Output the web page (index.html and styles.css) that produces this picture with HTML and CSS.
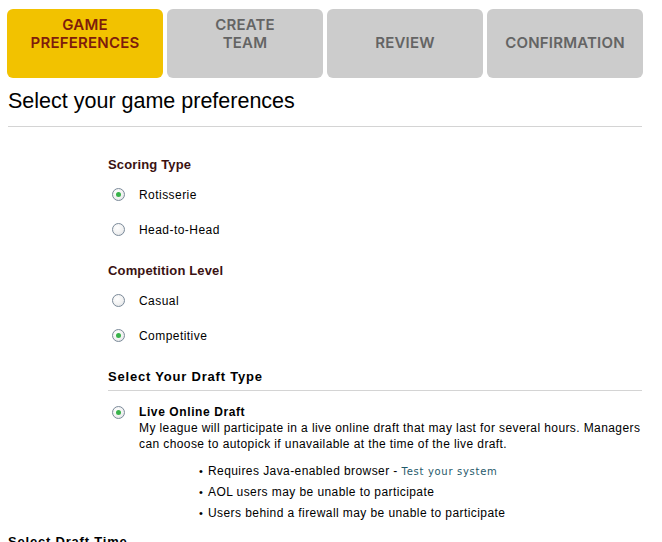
FILE: index.html
```html
<!DOCTYPE html>
<html>
<head>
<meta charset="utf-8">
<link rel="stylesheet" href="styles.css">
</head>
<body>
<div class="tabs">
  <div class="tab active">GAME<br>PREFERENCES</div>
  <div class="tab">CREATE<br>TEAM</div>
  <div class="tab single">REVIEW</div>
  <div class="tab single">CONFIRMATION</div>
</div>
<h1 class="title">Select your game preferences</h1>
<div class="rule"></div>
<div class="form">
  <div class="heading">Scoring Type</div>
  <div class="row"><span class="radio on"></span><span>Rotisserie</span></div>
  <div class="row"><span class="radio"></span><span>Head-to-Head</span></div>

  <div class="heading gap">Competition Level</div>
  <div class="row"><span class="radio"></span><span>Casual</span></div>
  <div class="row"><span class="radio on"></span><span>Competitive</span></div>

  <div class="heading black gap ruled">Select Your Draft Type</div>
  <div class="draft">
    <span class="radio on"></span>
    <div class="draft-body">
      <div class="draft-name">Live Online Draft</div>
      <div class="draft-desc">My league will participate in a live online draft that may last for several hours. Managers can choose to autopick if unavailable at the time of the live draft.</div>
    </div>
  </div>
  <ul class="notes">
    <li>Requires Java-enabled browser - <a class="test" href="#">Test your system</a></li>
    <li>AOL users may be unable to participate</li>
    <li>Users behind a firewall may be unable to participate</li>
  </ul>
</div>
<div class="heading black bottom">Select Draft Time</div>
</body>
</html>
```
FILE: styles.css
```css
html, body {
  margin: 0;
  padding: 0;
  background: #ffffff;
  font-family: "Liberation Sans", Arial, sans-serif;
  color: #000000;
}
.tabs {
  display: flex;
  gap: 4px;
  padding: 9px 0 0 7px;
}
.tab {
  width: 156px;
  height: 69px;
  box-sizing: border-box;
  padding-top: 7px;
  border-radius: 6px;
  background: #cccccc;
  color: #646464;
  font-family: "Inter", "Open Sans", sans-serif;
  font-weight: 600;
  font-size: 15px;
  line-height: 18px;
  text-align: center;
  letter-spacing: 0.2px;
}
.tab.single {
  padding-top: 25px;
}
.tab.active {
  background: #f2c200;
  color: #7e1c0c;
}
.title {
  margin: 11px 0 0 8px;
  font-weight: normal;
  font-size: 21.5px;
  line-height: 24px;
}
.rule {
  margin: 13px 20px 0 8px;
  height: 1px;
  background: #d4d4d4;
}
.form {
  padding-left: 108px;
  padding-right: 20px;
}
.heading {
  margin-top: 30px;
  font-weight: bold;
  font-size: 13px;
  line-height: 16px;
  color: #3a1212;
  letter-spacing: 0.15px;
}
.heading.gap {
  margin-top: 16px;
}
.heading.black {
  color: #000000;
  letter-spacing: 0.8px;
}
.heading.ruled {
  padding-bottom: 5px;
  border-bottom: 1px solid #d4d4d4;
}
.heading.bottom {
  margin: 10px 0 0 8px;
}
.row {
  display: flex;
  align-items: center;
  height: 35px;
  font-size: 12px;
  letter-spacing: 0.45px;
}
.form .heading + .row {
  margin-top: 4px;
}
.radio {
  flex: none;
  width: 11px;
  height: 11px;
  margin: 0 14px 0 4px;
  border: 1px solid #7b8a99;
  border-radius: 50%;
  background: radial-gradient(circle at 40% 35%, #ffffff 0%, #f1f1f1 55%, #d8dde3 100%);
  position: relative;
}
.radio.on::after {
  content: "";
  position: absolute;
  left: 3px;
  top: 3px;
  width: 5px;
  height: 5px;
  border-radius: 50%;
  background: #38b24a;
}
.draft {
  display: flex;
  align-items: flex-start;
  margin-top: 13px;
  margin-right: -14px;
}
.draft .radio {
  margin-top: 2px;
}
.draft-name {
  font-weight: bold;
  font-size: 12px;
  line-height: 16px;
  letter-spacing: 0.6px;
}
.draft-desc {
  font-size: 12px;
  line-height: 16px;
  letter-spacing: 0.4px;
}
.notes {
  list-style: none;
  margin: 9px 0 0 0;
  padding: 0 0 0 91px;
  font-size: 12px;
  line-height: 21px;
  letter-spacing: 0.42px;
}
.notes li::before {
  content: "\2022";
  display: inline-block;
  width: 9px;
  font-size: 11px;
  letter-spacing: 0;
}
.test {
  font-family: "DejaVu Sans", Verdana, sans-serif;
  font-size: 10px;
  letter-spacing: 0.7px;
  color: #1f5a6b;
  text-decoration: none;
}
```
